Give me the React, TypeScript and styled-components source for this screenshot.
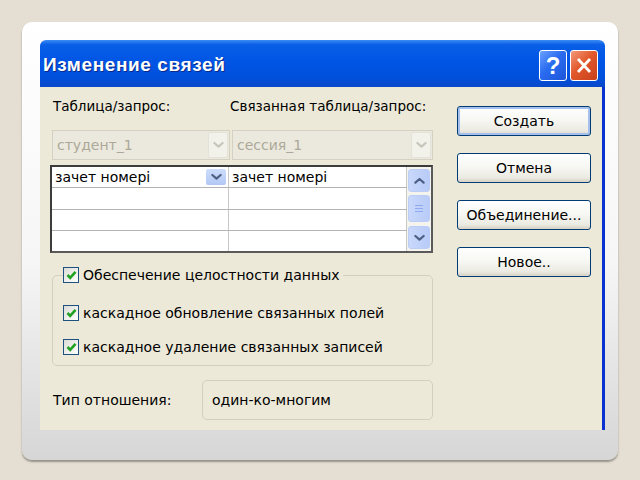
import React from 'react';
import styled, { createGlobalStyle } from 'styled-components';

const Global = createGlobalStyle`
  html, body { margin: 0; padding: 0; background: #e5ded3; }
  body { font-family: "DejaVu Sans", Tahoma, sans-serif; }
`;

const Page = styled.div`
  width: 640px; height: 480px; padding: 22px; box-sizing: border-box;
`;

const Card = styled.div`
  width: 596px; height: 438px; box-sizing: border-box;
  padding: 18px 13px 0 18px;
  border-radius: 10px;
  background: linear-gradient(#ffffff 0%, #f6f6f6 55%, #dedede 88%, #d6d6d6 100%);
  box-shadow: 0 2px 2px rgba(0,0,0,.35);
`;

const Dialog = styled.div`
  width: 565px; display: flex; flex-direction: column;
`;

const TitleBar = styled.div`
  height: 47px; display: flex; align-items: center; justify-content: space-between;
  padding: 0 7px 0 3px;
  border-radius: 6px 6px 0 0;
  background: linear-gradient(#3b8cf5 0%, #0a5fe6 10%, #0055e5 45%, #0050dc 80%, #0a48c8 100%);
`;

const Title = styled.div`
  color: #fff; font-family: "Liberation Sans", sans-serif; font-weight: bold; font-size: 19px;
  letter-spacing: 0.6px; text-shadow: 1px 1px 0 #0a2a88; padding-top: 2px;
`;

const TitleButtons = styled.div`
  display: flex; gap: 3px; padding-top: 4px;
`;

const CapBtn = styled.div<{ kind: 'help' | 'close' }>`
  width: 26px; height: 29px; border: 1px solid #fff; border-radius: 3px;
  display: flex; align-items: center; justify-content: center;
  color: #fff; font-family: "Liberation Sans", sans-serif; font-size: 24px; font-weight: bold;
  background: ${({ kind }) =>
    kind === 'help'
      ? 'linear-gradient(135deg, #6aa0ff 0%, #2a6cf0 45%, #1c55d8 100%)'
      : 'linear-gradient(135deg, #f29a7a 0%, #e2582c 45%, #c8401c 100%)'};
`;

const Body = styled.div`
  background: #ece9d8; border-right: 3px solid #0a32d0;
  height: 343px; box-sizing: border-box;
  display: flex; gap: 24px; padding: 8px 12px 0 10px;
`;

const Left = styled.div`
  width: 383px; display: flex; flex-direction: column;
`;

const Labels = styled.div`
  display: flex; font-size: 13.5px; color: #000; height: 22px; align-items: center; padding-left: 3px;
  white-space: nowrap;
`;

const Label = styled.div<{ w?: number }>`
  width: ${({ w }) => (w ? `${w}px` : 'auto')};
`;

const ComboRow = styled.div`
  display: flex; gap: 2px; margin-top: 13px; padding-left: 2px;
`;

const Combo = styled.div<{ w: number }>`
  width: ${({ w }) => w}px; height: 30px; box-sizing: border-box;
  border: 1px solid #d4d1c2; background: #ebe9dd;
  display: flex; align-items: center; justify-content: space-between;
  padding: 0 1px 0 4px; color: #aca899; font-size: 14px;
`;

const ComboArrow = styled.div`
  width: 20px; height: 26px; box-sizing: border-box; border: 1px solid #e4e2d8;
  background: #f3f2ea; border-radius: 2px;
  display: flex; align-items: center; justify-content: center;
`;

const Grid = styled.div`
  margin-top: 5px; height: 88px; box-sizing: border-box;
  border: 2px solid #3c3c3c; border-right-color: #5a5a5a; border-bottom-color: #5a5a5a;
  background: #fff; display: flex;
`;

const Cols = styled.div`
  flex: 1; display: flex; flex-direction: column;
`;

const Row = styled.div`
  height: 21px; display: flex; border-bottom: 1px solid #b4b4b4;
  &:last-child { border-bottom: none; }
`;

const Cell = styled.div<{ w?: number }>`
  ${({ w }) => (w ? `width: ${w}px;` : 'flex: 1;')}
  box-sizing: border-box; display: flex; align-items: center; justify-content: space-between;
  padding: 0 2px 0 3px; font-size: 14px; color: #000;
  border-right: 1px solid #c8c8c8;
`;

const BlueArrow = styled.div`
  width: 20px; height: 16px; border-radius: 2px;
  background: linear-gradient(#cddcfb, #b2c8f4);
  display: flex; align-items: center; justify-content: center;
`;

const ScrollBar = styled.div`
  width: 24px; display: flex; flex-direction: column; justify-content: space-between;
  padding: 2px 1px; box-sizing: border-box; background: #f4f3ee;
`;

const ScrollTop = styled.div`
  display: flex; flex-direction: column; gap: 3px;
`;

const ScrollBtn = styled.div<{ h: number }>`
  height: ${({ h }) => h}px; border: 1px solid #bccdf5; border-radius: 3px;
  background: linear-gradient(90deg, #c9d8fb, #b8cbf7);
  display: flex; align-items: center; justify-content: center;
`;

const Group = styled.fieldset`
  margin: 13px 0 0 2px; padding: 20px 0 6px 10px; height: 100px; box-sizing: border-box;
  border: 1px solid #d0d0bf; border-radius: 5px;
  display: flex; flex-direction: column; gap: 16px;
  & > legend { padding: 0 4px 0 0; margin-left: 0; }
`;

const Check = styled.label`
  display: flex; align-items: center; gap: 4px; font-size: 14px; color: #000; height: 18px;
`;

const Box = styled.span`
  width: 16px; height: 16px; border: 1px solid #1c5180; box-sizing: border-box;
  background: linear-gradient(135deg, #dcdcd6, #fff);
  display: flex; align-items: center; justify-content: center;
`;

const RelRow = styled.div`
  display: flex; align-items: center; margin-top: 14px; padding-left: 3px;
`;

const RelLabel = styled.div`
  width: 149px; font-size: 14px; color: #000;
`;

const RelBox = styled.div`
  width: 231px; height: 40px; box-sizing: border-box;
  border: 1px solid #d0cfc0; border-radius: 5px;
  display: flex; align-items: center; padding-left: 9px; font-size: 14px; color: #000;
`;

const Right = styled.div`
  display: flex; flex-direction: column; gap: 17px; padding-top: 11px;
`;

const Button = styled.div<{ primary?: boolean }>`
  width: 134px; height: 30px; box-sizing: border-box;
  border: 1px solid #003c74; border-radius: 3px;
  background: linear-gradient(#ffffff 0%, #f6f6f2 50%, #ebeae2 85%, #d6d0c5 100%);
  ${({ primary }) => (primary ? 'box-shadow: inset 0 0 0 2px #a6c0ee;' : 'box-shadow: inset 0 -2px 0 #dcd8cc;')}
  display: flex; align-items: center; justify-content: center;
  font-size: 14px; color: #000;
`;

const Chevron = ({ dir, color, size = 12 }: { dir: 'up' | 'down'; color: string; size?: number }) => (
  <svg width={size} height={size * 0.7} viewBox="0 0 12 8">
    <path
      d={dir === 'down' ? 'M1.5 2 L6 6 L10.5 2' : 'M1.5 6 L6 2 L10.5 6'}
      fill="none" stroke={color} strokeWidth="2.4" strokeLinecap="round" strokeLinejoin="round"
    />
  </svg>
);

const Tick = () => (
  <svg width="11" height="10" viewBox="0 0 11 10">
    <path d="M1.5 5 L4.2 7.8 L9.5 1.8" fill="none" stroke="#21a121" strokeWidth="2.6" />
  </svg>
);

const Grip = () => (
  <svg width="10" height="9" viewBox="0 0 10 9">
    <path d="M1 1.5H9M1 4.5H9M1 7.5H9" stroke="#8eaaf0" strokeWidth="1" />
  </svg>
);

const CheckItem = ({ text }: { text: string }) => (
  <Check>
    <Box><Tick /></Box>
    {text}
  </Check>
);

export default function App() {
  return (
    <Page>
      <Global />
      <Card>
        <Dialog>
          <TitleBar>
            <Title>Изменение связей</Title>
            <TitleButtons>
              <CapBtn kind="help">?</CapBtn>
              <CapBtn kind="close">
                <svg width="16" height="17" viewBox="0 0 16 17">
                  <path d="M2 2 L14 15 M14 2 L2 15" stroke="#fff" strokeWidth="2.8" />
                </svg>
              </CapBtn>
            </TitleButtons>
          </TitleBar>
          <Body>
            <Left>
              <Labels>
                <Label w={177}>Таблица/запрос:</Label>
                <Label>Связанная таблица/запрос:</Label>
              </Labels>
              <ComboRow>
                <Combo w={178}>
                  студент_1
                  <ComboArrow><Chevron dir="down" color="#c8c6ba" size={11} /></ComboArrow>
                </Combo>
                <Combo w={201}>
                  сессия_1
                  <ComboArrow><Chevron dir="down" color="#c8c6ba" size={11} /></ComboArrow>
                </Combo>
              </ComboRow>
              <Grid>
                <Cols>
                  <Row>
                    <Cell w={177}>
                      зачет номері
                      <BlueArrow><Chevron dir="down" color="#4d6185" size={11} /></BlueArrow>
                    </Cell>
                    <Cell>зачет номері</Cell>
                  </Row>
                  {[0, 1, 2].map(i => (
                    <Row key={i}>
                      <Cell w={177} />
                      <Cell />
                    </Row>
                  ))}
                </Cols>
                <ScrollBar>
                  <ScrollTop>
                    <ScrollBtn h={21}><Chevron dir="up" color="#4d6185" size={11} /></ScrollBtn>
                    <ScrollBtn h={25}><Grip /></ScrollBtn>
                  </ScrollTop>
                  <ScrollBtn h={21}><Chevron dir="down" color="#4d6185" size={11} /></ScrollBtn>
                </ScrollBar>
              </Grid>
              <Group>
                <legend><CheckItem text="Обеспечение целостности данных" /></legend>
                <CheckItem text="каскадное обновление связанных полей" />
                <CheckItem text="каскадное удаление связанных записей" />
              </Group>
              <RelRow>
                <RelLabel>Тип отношения:</RelLabel>
                <RelBox>один-ко-многим</RelBox>
              </RelRow>
            </Left>
            <Right>
              <Button primary>Создать</Button>
              <Button>Отмена</Button>
              <Button>Объединение...</Button>
              <Button>Новое..</Button>
            </Right>
          </Body>
        </Dialog>
      </Card>
    </Page>
  );
}
